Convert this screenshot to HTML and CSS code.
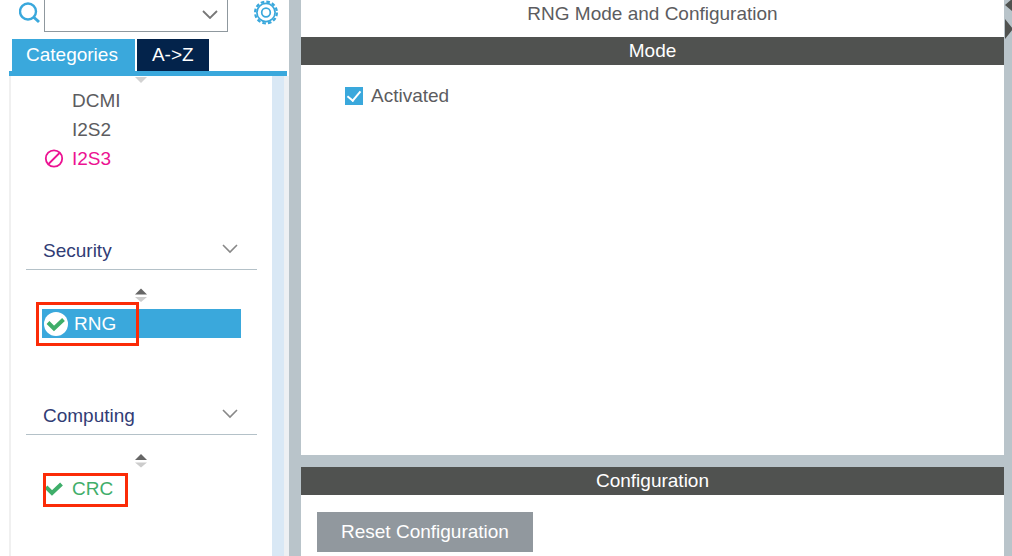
FILE: index.html
```html
<!DOCTYPE html>
<html lang="en">
<head>
<meta charset="utf-8">
<title>RNG Mode and Configuration</title>
<link rel="stylesheet" href="styles.css">
</head>
<body>
<div class="app">
  <aside class="sidebar">
    <div class="search">
      <svg class="search-icon" width="24" height="26" viewBox="0 0 24 26" fill="none" stroke="#3aa8dc"><circle cx="9" cy="11.500" r="8" stroke-width="2.400"/><path d="M14.500 17l5.500 5" stroke-width="3"/></svg>
      <div class="combo">
        <select class="combo-field" aria-label="Search"><option></option></select>
        <svg class="combo-arrow" width="16" height="9" viewBox="0 0 16 9" fill="none" stroke="#777" stroke-width="1.800"><path d="M1 1l7 7 7-7"/></svg>
      </div>
      <button class="gear" aria-label="Settings">
        <svg width="26" height="26" viewBox="0 0 26 26" fill="none" stroke="#3aa8dc"><circle cx="13" cy="12.500" r="9.100" stroke-width="1.700"/><circle cx="13" cy="12.500" r="10.900" stroke-width="2.200" stroke-dasharray="3.600 2.107"/><circle cx="13" cy="12.500" r="4.300" stroke-width="1.700"/></svg>
      </button>
    </div>
    <div class="tabs">
      <button class="tab tab-active">Categories</button>
      <button class="tab">A-&gt;Z</button>
    </div>
    <div class="tree">
      <div class="tree-body">
        <svg class="sorter sorter-cut" width="14" height="8" viewBox="0 0 14 8"><path d="M0 1h12L6 7z" fill="#d2d2d2"/></svg>
        <ul class="items">
          <li class="item">DCMI</li>
          <li class="item">I2S2</li>
          <li class="item item-blocked"><svg class="mark" width="20" height="20" viewBox="0 0 20 20" fill="none" stroke="#ec1292" stroke-width="1.800"><circle cx="10" cy="9.500" r="8.200"/><path d="M4.500 15l11-11"/></svg>I2S3</li>
        </ul>
        <section class="group">
          <button class="group-head">Security <svg width="16" height="10" viewBox="0 0 16 10" fill="none" stroke="#888" stroke-width="1.600"><path d="M1 1l7 7 7-7"/></svg></button>
          <svg class="sorter" width="14" height="16" viewBox="0 0 14 16"><path d="M0 7.500h12L6 1.500z" fill="#666"/><path d="M0 10h12l-6 5z" fill="#ccc"/></svg>
          <ul class="items">
            <li class="item item-selected"><svg class="mark mark-disc" width="24" height="24" viewBox="0 0 24 24"><circle cx="12" cy="12" r="12" fill="#fff"/><path d="M4 10.500l6 6 9.500-9" fill="none" stroke="#3fae6a" stroke-width="4"/></svg>RNG<span class="callout callout-rng"></span></li>
          </ul>
        </section>
        <section class="group">
          <button class="group-head">Computing <svg width="16" height="10" viewBox="0 0 16 10" fill="none" stroke="#888" stroke-width="1.600"><path d="M1 1l7 7 7-7"/></svg></button>
          <svg class="sorter" width="14" height="16" viewBox="0 0 14 16"><path d="M0 8h12L6 2z" fill="#666"/><path d="M0 10.500h12l-6 5z" fill="#ccc"/></svg>
          <ul class="items">
            <li class="item item-ok"><svg class="mark" width="20" height="20" viewBox="0 0 20 20"><path d="M2 8l6 6 9.500-9" fill="none" stroke="#3fae6a" stroke-width="4"/></svg>CRC<span class="callout callout-crc"></span></li>
          </ul>
        </section>
      </div>
      <div class="scrollbar"></div>
    </div>
  </aside>
  <main class="main">
    <section class="panel panel-mode">
      <h1 class="title">RNG Mode and Configuration</h1>
      <h2 class="bar">Mode</h2>
      <label class="check"><input class="check-box" type="checkbox" checked>Activated</label>
    </section>
    <section class="panel panel-config">
      <h2 class="bar">Configuration</h2>
      <button class="reset">Reset Configuration</button>
    </section>
  </main>
  <div class="edge">
    <svg width="8" height="40" viewBox="0 0 8 40"><path d="M1 5l7-6v12zM1 19l8 10-8 10z" fill="#505250"/></svg>
  </div>
</div>
</body>
</html>
```
FILE: styles.css
```css
* { box-sizing: border-box; }
body {
  margin: 0;
  color: #5c5c60;
  background: #fff;
  font: 19px/28px "Liberation Sans", Arial, sans-serif;
}
button {
  margin: 0;
  padding: 0;
  border: 0;
  background: none;
  color: inherit;
  font: inherit;
}
svg { display: block; flex: none; }
ul { margin: 0; padding: 0; list-style: none; }
h1, h2 { margin: 0; font-size: inherit; font-weight: normal; text-align: center; }

.app { display: flex; min-height: 100vh; }
.sidebar {
  display: flex;
  flex: 0 0 289px;
  flex-direction: column;
}

.search { display: flex; height: 39px; padding-left: 19px; }
.combo { position: relative; width: 184px; height: 32px; margin-left: 1px; }
.combo-field {
  display: block;
  width: 100%;
  height: 100%;
  border: 1px solid #8f989e;
  border-top: 0;
  border-radius: 0;
  background: #fff;
  appearance: none;
}
.combo-arrow { position: absolute; top: 10px; right: 10px; pointer-events: none; }
.gear { align-self: flex-start; margin-left: 25px; }

.tabs {
  display: flex;
  gap: 2px;
  height: 37px;
  margin: 0 2px 0 9px;
  padding-left: 3px;
  border-bottom: 5px solid #3aa8dc;
}
.tab { padding: 0 15px; background: #03234b; color: #fff; }
.tab-active { padding: 0 17px 0 14px; background: #3aa8dc; }

.tree {
  display: flex;
  flex: 1;
  margin-left: 9px;
  border-left: 2px solid #f0f0f0;
}
.tree-body { flex: 1; padding: 0 15px; }
.scrollbar {
  width: 17px;
  border-right: 5px solid #edf0f3;
  background: #d9e8f5;
}
.sorter { margin: 17px auto 6px; }
.sorter-cut { margin: 0 auto 2px; }
.items { margin: 0 16px; }
.item {
  position: relative;
  display: flex;
  align-items: center;
  height: 29px;
  padding-left: 30px;
}
.item .mark { width: 20px; margin: 0 8px 0 -28px; }
.item .mark-disc { width: 24px; margin: 0 6px 0 -28px; }
.item-blocked { color: #ec1292; }
.item-selected { background: #3aa8dc; color: #fff; }
.item-ok { color: #3fae6a; }

.group { padding-top: 64px; }
.group-head {
  display: flex;
  align-items: flex-start;
  justify-content: space-between;
  width: 100%;
  height: 33px;
  padding: 0 19px 0 17px;
  border-bottom: 1px solid #b4c1c8;
  color: #313c75;
}
.group-head svg { margin-top: 7px; }

.callout { position: absolute; border: 3px solid #fb2b07; pointer-events: none; }
.callout-rng { inset: -7px auto -8px -6px; width: 103px; }
.callout-crc { inset: -1px auto -4px 1px; width: 85px; }

.main {
  display: flex;
  flex: 1;
  flex-direction: column;
  gap: 12px;
  padding-left: 12px;
  background: #b9c4ca;
}
.panel { background: #fff; }
.panel-mode { flex: 1; }
.panel-config { padding-bottom: 4px; }
.title { height: 37px; }
.bar { background: #505250; color: #fff; }
.check {
  display: flex;
  align-items: center;
  gap: 8px;
  width: max-content;
  margin: 17px 0 0 44px;
}
.check-box {
  display: grid;
  place-items: center;
  width: 18px;
  height: 18px;
  margin: 0;
  background: #3aa8dc;
  appearance: none;
}
.check-box:checked::after {
  content: "";
  width: 6px;
  height: 11px;
  margin-bottom: 3px;
  border: solid #fff;
  border-width: 0 2px 2px 0;
  transform: rotate(40deg);
}
.reset {
  display: block;
  height: 40px;
  margin: 17px 0 0 16px;
  padding: 0 24px;
  background: #91989e;
  color: #fff;
}
.edge { flex: 0 0 8px; background: #b9c4ca; }
```
